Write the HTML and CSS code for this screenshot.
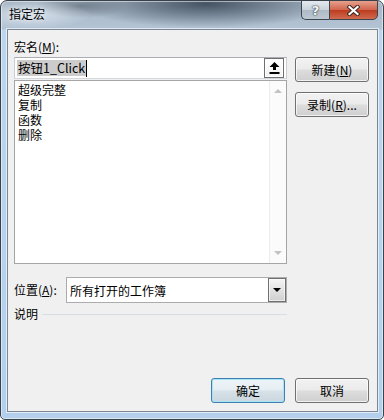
FILE: index.html
```html
<!DOCTYPE html>
<html lang="zh-CN">
<head>
    <meta charset="UTF-8">
    <title>指定宏</title>
    <link rel="stylesheet" href="styles.css">
</head>
<body>

<div class="window">
    <div class="titlebar">
        <span class="title">指定宏</span>
        <div class="caption">
            <span class="cap-btn help">?</span>
            <span class="cap-btn close">
                <svg width="13" height="11" viewBox="0 0 13 11">
                    <path d="M2.5 2 L10.5 9 M10.5 2 L2.5 9" stroke="#3b2722" stroke-width="4.2" stroke-linecap="square"/>
                    <path d="M2.5 2 L10.5 9 M10.5 2 L2.5 9" stroke="#ffffff" stroke-width="2.2" stroke-linecap="square"/>
                </svg>
            </span>
        </div>
    </div>

    <div class="client">
        <div class="top">
            <div class="main-col">
                <div class="field-label">宏名(<u>M</u>):</div>
                <div class="name-box">
                    <span class="name-text"><span class="sel">按钮1_Click</span><span class="caret"></span></span>
                    <span class="ref-btn">
                        <svg width="11" height="12" viewBox="0 0 11 12">
                            <path d="M5.5 0 L10.5 5 L7 5 L7 8 L4 8 L4 5 L0.5 5 Z" fill="#000"/>
                            <rect x="0.5" y="10" width="10" height="2" fill="#000"/>
                        </svg>
                    </span>
                </div>
                <div class="macro-list">
                    <ul>
                        <li>超级完整</li>
                        <li>复制</li>
                        <li>函数</li>
                        <li>删除</li>
                    </ul>
                    <div class="vscroll">
                        <span class="arrow up"></span>
                        <span class="arrow down"></span>
                    </div>
                </div>
            </div>
            <div class="side-col">
                <button class="btn">新建(<u>N</u>)</button>
                <button class="btn">录制(<u>R</u>)...</button>
            </div>
        </div>

        <div class="location-row">
            <div class="loc-label">位置(<u>A</u>):</div>
            <div class="combo">
                <span class="combo-text">所有打开的工作簿</span>
                <span class="drop-btn"><span class="tri"></span></span>
            </div>
        </div>

        <div class="desc">
            <span>说明</span>
            <span class="rule"></span>
        </div>

        <div class="footer">
            <button class="btn default">确定</button>
            <button class="btn">取消</button>
        </div>
    </div>
</div>

</body>
</html>
```

FILE: styles.css
```css
* {
    box-sizing: border-box;
}

body {
    margin: 0;
    font-family: "Noto Sans CJK SC", "Noto Sans", sans-serif;
    font-size: 12px;
    color: #000;
    background-color: #fff;
}

.window {
    width: 384px;
    height: 420px;
    border: 1px solid #38424c;
    border-radius: 7px 7px 5px 5px;
    padding: 0 5px 7px 6px;
    display: flex;
    flex-direction: column;
    background:
        radial-gradient(ellipse 60px 14px at 30px 14px, rgba(230, 237, 244, 0.75), transparent),
        radial-gradient(ellipse 130px 24px at 205px 3px, rgba(58, 72, 88, 0.9), transparent),
        radial-gradient(ellipse 45px 12px at 80px 5px, rgba(85, 96, 108, 0.6), transparent),
        linear-gradient(#a7b6c5 0, #b3c4d5 28px, #bdd6ee 29px, #b3cfeb 100%);
    box-shadow: inset 0 0 0 1px rgba(255, 255, 255, 0.5);
    overflow: hidden;
}

/* title bar */
.titlebar {
    height: 28px;
    display: flex;
    justify-content: space-between;
    align-items: flex-start;
}

.title {
    padding: 5px 0 0 2px;
    line-height: 16px;
    text-shadow: 0 0 4px rgba(255, 255, 255, 0.9);
}

.caption {
    display: flex;
    margin-top: -1px;
}

.cap-btn {
    height: 20px;
    border: 1px solid #3d4650;
    display: flex;
    align-items: center;
    justify-content: center;
}

.help {
    width: 28px;
    border-right: none;
    border-radius: 0 0 0 5px;
    background: linear-gradient(#e4e9ee, #c9d2db 50%, #aebac6 51%, #bcc7d2);
    font-family: "DejaVu Sans", sans-serif;
    font-weight: bold;
    font-size: 13px;
    color: #f4f6f8;
    text-shadow: 0 0 1px #2a3038, 0 0 2px #2a3038;
}

.close {
    width: 49px;
    border-radius: 0 0 5px 0;
    background: linear-gradient(#e6a18e, #d1664d 48%, #bd3d21 52%, #cf6a4e);
}

/* client area */
.client {
    flex: 1;
    background-color: #f0f0f0;
    border: 1px solid #7b8795;
    box-shadow: 0 0 0 1px rgba(255, 255, 255, 0.6);
    padding: 9px 8px 8px 6px;
    display: flex;
    flex-direction: column;
}

.top {
    display: flex;
    gap: 8px;
}

.main-col {
    width: 273px;
}

.field-label,
.loc-label {
    line-height: 16px;
}

.name-box {
    height: 22px;
    margin-top: 2px;
    border: 1px solid #abadb3;
    border-color: #abadb3 #c9ced5 #d3d8de #c9ced5;
    background-color: #fff;
    display: flex;
    align-items: center;
    justify-content: space-between;
    padding: 0 2px 0 2px;
}

.name-text {
    display: flex;
    align-items: center;
    font-size: 12.5px;
}

.sel {
    background-color: #cccccc;
    line-height: 16px;
    padding: 0 1px;
}

.caret {
    width: 1px;
    height: 17px;
    background-color: #000;
}

.ref-btn {
    width: 20px;
    height: 20px;
    border: 1px solid #6f6f6f;
    box-shadow: inset 0 0 0 1px #fff;
    background: linear-gradient(#ffffff, #f2f2f2);
    display: flex;
    align-items: center;
    justify-content: center;
}

.macro-list {
    height: 184px;
    margin-top: 1px;
    border: 1px solid #a5a5a5;
    background-color: #fff;
    display: flex;
}

.macro-list ul {
    flex: 1;
    margin: 0;
    padding: 1px 0 0 3px;
    list-style-type: none;
    line-height: 15px;
}

.vscroll {
    width: 17px;
    border-left: 1px solid #ececec;
    background-color: #fbfbfb;
    display: flex;
    flex-direction: column;
    justify-content: space-between;
    align-items: center;
    padding: 8px 0 8px;
}

.arrow {
    width: 0;
    height: 0;
    border-left: 4px solid transparent;
    border-right: 4px solid transparent;
}

.arrow.up {
    border-bottom: 4px solid #c2c2c2;
}

.arrow.down {
    border-top: 4px solid #c2c2c2;
}

.side-col {
    padding-top: 18px;
    display: flex;
    flex-direction: column;
    gap: 10px;
}

/* buttons */
.btn {
    width: 74px;
    height: 25px;
    padding: 0;
    font-family: inherit;
    font-size: 12px;
    color: #000;
    border: 1px solid #707070;
    border-radius: 3px;
    background: linear-gradient(#f2f2f2 0%, #ebebeb 48%, #dddddd 52%, #cfcfcf 100%);
    box-shadow: inset 0 0 0 1px rgba(255, 255, 255, 0.7);
}

.btn.default {
    border-color: #3c7fb1;
    box-shadow: inset 0 0 0 1px #a8e3f8;
    background: linear-gradient(#eef5f9 0%, #e6eef3 48%, #d6e1e8 52%, #cbd6de 100%);
}

/* location */
.location-row {
    margin-top: 13px;
    display: flex;
    align-items: center;
}

.loc-label {
    width: 52px;
}

.combo {
    width: 221px;
    height: 26px;
    border: 1px solid #acacac;
    background-color: #fff;
    display: flex;
    align-items: center;
    justify-content: space-between;
    padding: 0 0 0 3px;
}

.drop-btn {
    width: 18px;
    height: 24px;
    border: 1px solid #707070;
    background: linear-gradient(#f4f4f4, #e2e2e2 50%, #cfcfcf);
    box-shadow: inset 0 0 0 1px rgba(255, 255, 255, 0.6);
    display: flex;
    align-items: center;
    justify-content: center;
}

.tri {
    width: 0;
    height: 0;
    border-left: 4px solid transparent;
    border-right: 4px solid transparent;
    border-top: 4px solid #000;
}

.desc {
    margin-top: 3px;
    width: 273px;
    display: flex;
    align-items: center;
    line-height: 16px;
}

.rule {
    flex: 1;
    height: 1px;
    margin-left: 4px;
    background-color: #d5dfe5;
}

.footer {
    margin-top: auto;
    display: flex;
    justify-content: flex-end;
    gap: 10px;
}
```
